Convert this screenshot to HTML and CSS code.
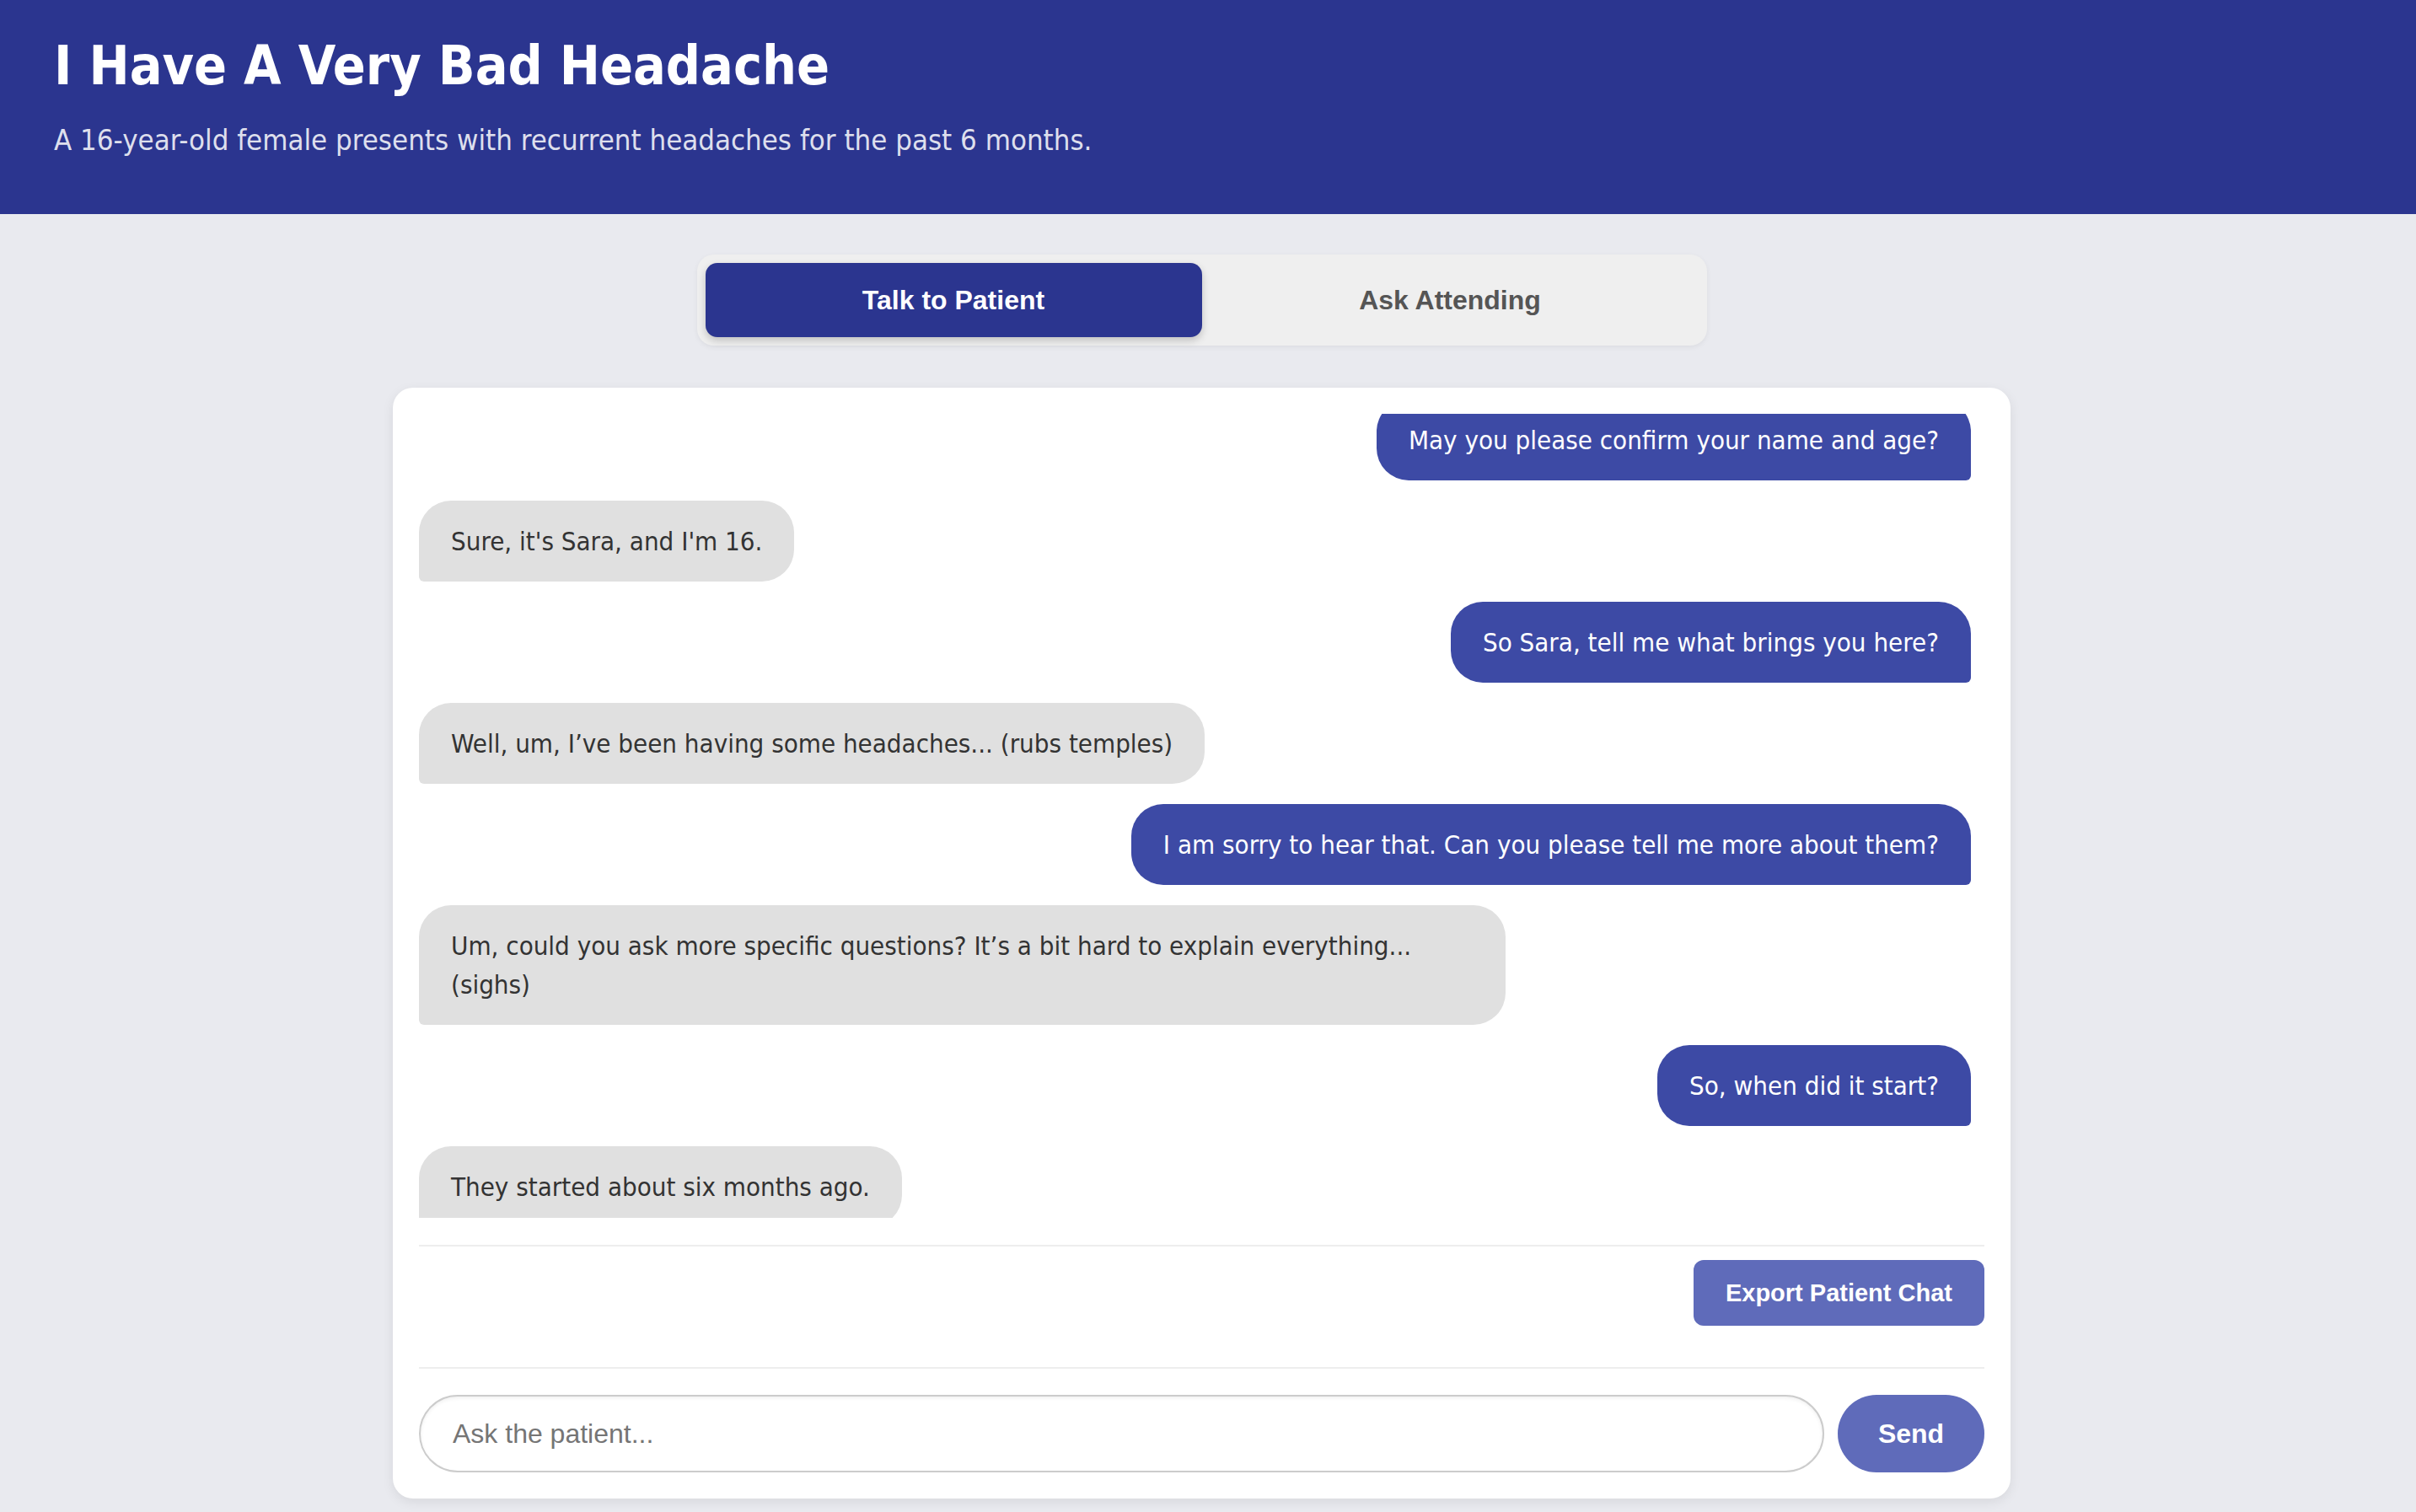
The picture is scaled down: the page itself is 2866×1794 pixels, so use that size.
FILE: index.html
```html
<!DOCTYPE html>
<html lang="en">
<head>
<meta charset="utf-8">
<title>I Have A Very Bad Headache</title>
<link rel="stylesheet" href="styles.css">
</head>
<body>
<header class="case-header">
  <h1 class="case-title">I Have A Very Bad Headache</h1>
  <p class="case-subtitle">A 16-year-old female presents with recurrent headaches for the past 6 months.</p>
</header>
<main class="page">
  <nav class="tabs">
    <button class="tab tab-active">Talk to Patient</button>
    <button class="tab">Ask Attending</button>
  </nav>
  <section class="chat-card">
    <div class="messages">
      <div class="message-list">
        <div class="msg msg-user">May you please confirm your name and age?</div>
        <div class="msg msg-bot">Sure, it's Sara, and I'm 16.</div>
        <div class="msg msg-user">So Sara, tell me what brings you here?</div>
        <div class="msg msg-bot">Well, um, I’ve been having some headaches... (rubs temples)</div>
        <div class="msg msg-user">I am sorry to hear that. Can you please tell me more about them?</div>
        <div class="msg msg-bot">Um, could you ask more specific questions? It’s a bit hard to explain everything... (sighs)</div>
        <div class="msg msg-user">So, when did it start?</div>
        <div class="msg msg-bot">They started about six months ago.</div>
      </div>
    </div>
    <div class="export-bar">
      <button class="export-btn">Export Patient Chat</button>
    </div>
    <div class="input-row">
      <input class="chat-input" type="text" placeholder="Ask the patient...">
      <button class="send-btn">Send</button>
    </div>
  </section>
</main>
</body>
</html>
```
FILE: styles.css
```css
html, body {
  margin: 0;
  padding: 0;
}
body {
  background: #e9eaef;
  font-family: "DejaVu Sans Condensed", "DejaVu Sans", sans-serif;
  color: #333;
  height: 1794px;
  overflow: hidden;
}
.case-header {
  background: #2b358f;
  color: #fff;
  padding: 40px 64px 0 64px;
  height: 214px;
}
.case-title {
  margin: 0;
  font-size: 64px;
  line-height: 77px;
  font-weight: bold;
}
.case-subtitle {
  margin: 26px 0 0 0;
  font-size: 34.5px;
  line-height: 46px;
  color: rgba(255, 255, 255, 0.86);
}
.page {
  display: flex;
  flex-direction: column;
  align-items: center;
  padding: 48px 15px 0 0;
}
.tabs {
  display: flex;
  width: 1198px;
  box-sizing: border-box;
  padding: 10px;
  background: #efefef;
  border-radius: 20px;
  box-shadow: 0 2px 6px rgba(0, 0, 0, 0.06);
}
.tab {
  flex: 1;
  height: 88px;
  border: none;
  border-radius: 14px;
  background: transparent;
  font-family: "Liberation Sans", Arial, sans-serif;
  font-weight: bold;
  font-size: 32px;
  color: #555;
}
.tab-active {
  background: #2b358f;
  color: #fff;
  box-shadow: 0 4px 10px rgba(0, 0, 0, 0.2);
}
.chat-card {
  margin-top: 50px;
  width: 1919px;
  box-sizing: border-box;
  padding: 31px 31px 31px 31px;
  background: #fff;
  border-radius: 24px;
  box-shadow: 0 4px 14px rgba(0, 0, 0, 0.08);
}
.messages {
  height: 954px;
  overflow: hidden;
  padding-right: 16px;
  margin-bottom: 32px;
}
.message-list {
  display: flex;
  flex-direction: column;
  gap: 24px;
  margin-top: -17px;
}
.msg {
  max-width: 70%;
  box-sizing: border-box;
  padding: 25px 38px;
  font-size: 31px;
  line-height: 46px;
}
.msg-user {
  align-self: flex-end;
  background: #3d4aa5;
  color: #fff;
  border-radius: 38px 38px 6px 38px;
}
.msg-bot {
  align-self: flex-start;
  background: #e0e0e0;
  color: #333;
  border-radius: 38px 38px 38px 6px;
}
.export-bar {
  display: flex;
  justify-content: flex-end;
  border-top: 2px solid #eeeeee;
  padding: 16px 0 49px 0;
}
.export-btn {
  height: 78px;
  padding: 0 38px;
  border: none;
  border-radius: 12px;
  background: #5f6bba;
  color: #fff;
  font-family: "Liberation Sans", Arial, sans-serif;
  font-weight: bold;
  font-size: 29px;
}
.input-row {
  display: flex;
  gap: 16px;
  border-top: 2px solid #eeeeee;
  padding-top: 31px;
}
.chat-input {
  flex: 1;
  height: 92px;
  box-sizing: border-box;
  padding: 0 38px;
  border: 2px solid #cccccc;
  border-radius: 46px;
  font-family: "Liberation Sans", Arial, sans-serif;
  font-size: 32px;
  color: #333;
  box-shadow: inset 0 2px 4px rgba(0, 0, 0, 0.06);
  outline: none;
}
.chat-input::placeholder {
  color: #757575;
}
.send-btn {
  width: 174px;
  height: 92px;
  border: none;
  border-radius: 46px;
  background: #5f6bba;
  color: #fff;
  font-family: "Liberation Sans", Arial, sans-serif;
  font-weight: bold;
  font-size: 32px;
}
```
